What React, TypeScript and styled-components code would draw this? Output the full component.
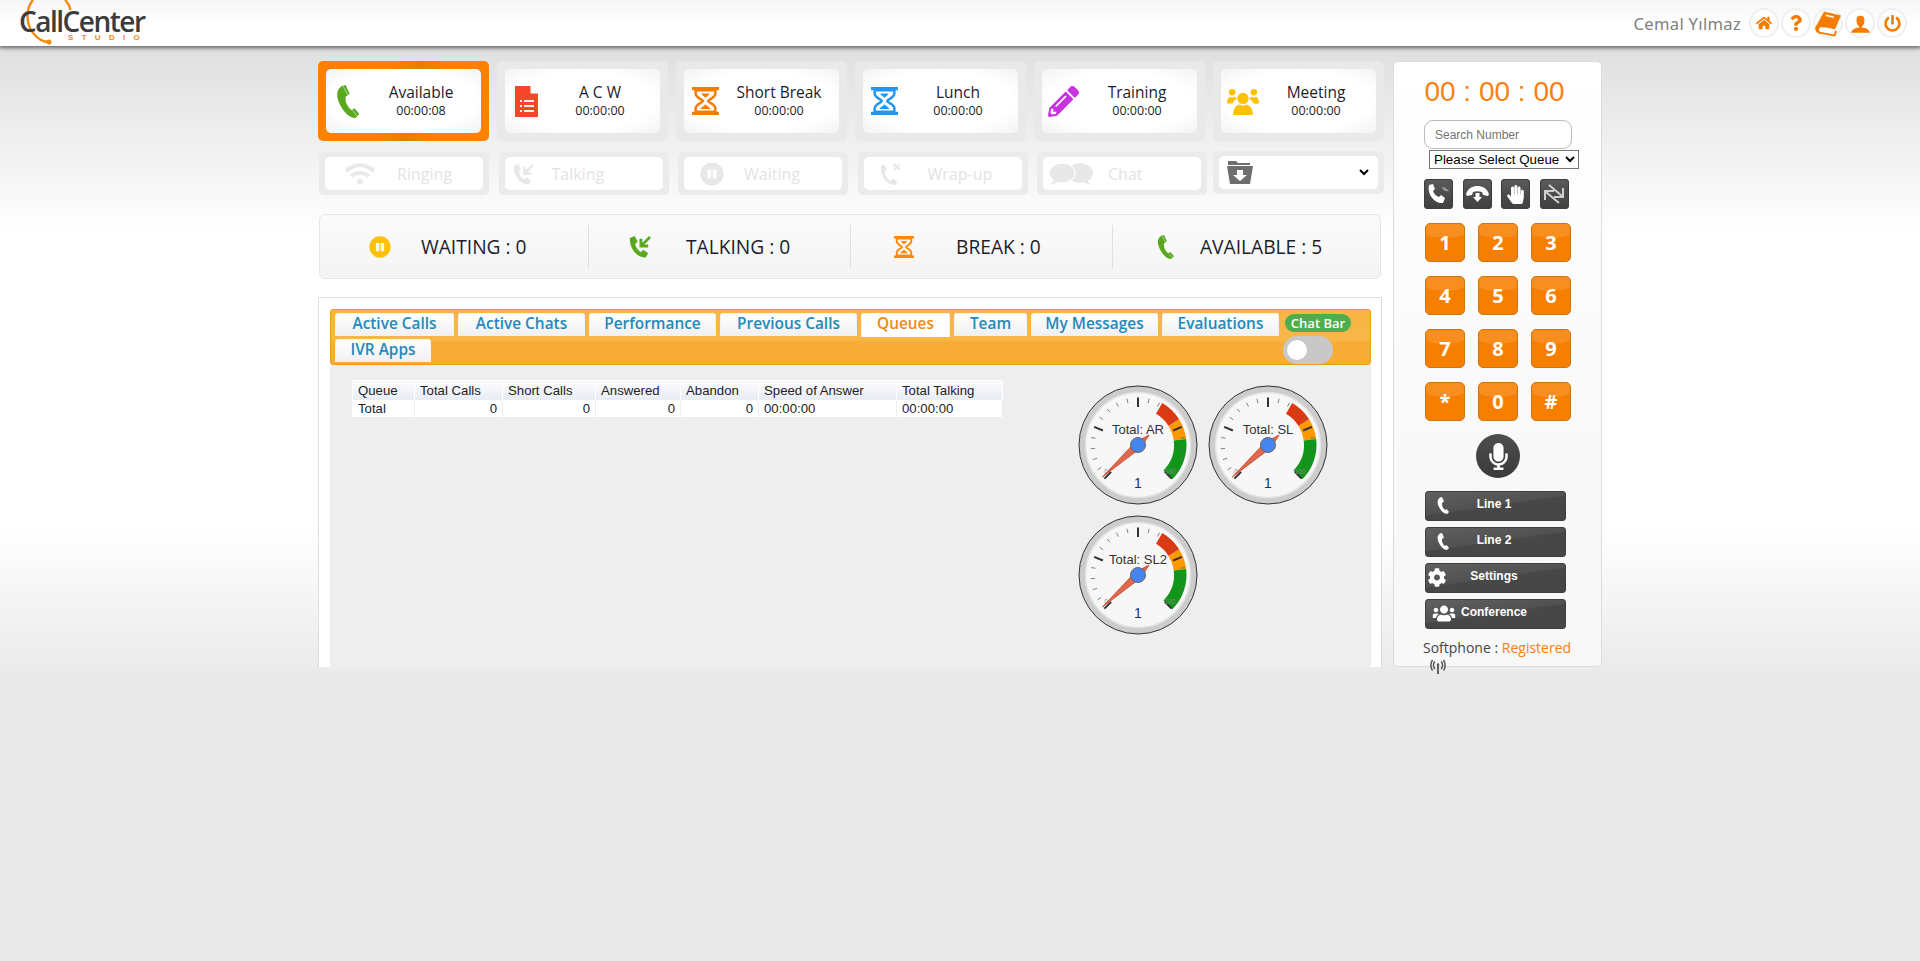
import React from 'react';
import styled, { createGlobalStyle } from 'styled-components';
import { FaPencilAlt, FaWifi, FaPauseCircle, FaHome, FaQuestion, FaPowerOff, FaHandPaper, FaCog, FaMicrophone, FaUsers } from 'react-icons/fa';
import { ImUser } from 'react-icons/im';

const Global = createGlobalStyle`
  html, body { margin: 0; padding: 0; }
  body {
    min-height: 961px;
    font-family: "Liberation Sans", Arial, sans-serif;
    background: linear-gradient(#dfdfdf 46px, #ffffff 232px, #ffffff 528px, #e9e9e9 680px);
    background-repeat: no-repeat;
    background-color: #e9e9e9;
  }
`;

const Page = styled.div`min-height: 961px; overflow: hidden;`;
const Header = styled.header`
  height: 46px; display: flex; align-items: center; justify-content: space-between;
  background: linear-gradient(#f6f6f6, #ffffff 55%, #ffffff);
  box-shadow: 0 1px 4px 1px rgba(0,0,0,.55);
  position: relative; padding: 0 13px 0 20px;
`;
const Logo = styled.div`position: relative; width: 130px; height: 46px; overflow: hidden;`;
const LogoArc = styled.svg`position: absolute; left: 0; top: 0;`;
const LogoText = styled.div`
  position: absolute; left: -1px; top: 8px; font: 600 28px/26px "Open Sans", sans-serif; letter-spacing: -1.5px;
  color: #3c3c3c; white-space: nowrap;
`;
const LogoSub = styled.div`
  position: absolute; left: 48px; top: 34px; font: 700 8px/8px "Liberation Sans", sans-serif; letter-spacing: 8.3px;
  color: #f58a0b; white-space: nowrap;
`;
const UserBar = styled.div`display: flex; align-items: center;`;
const UserName = styled.span`font: 400 16.6px "Noto Sans", sans-serif; color: #808080; margin-right: 6px; letter-spacing: .3px;`;
const Round = styled.span`
  width: 30px; height: 30px; box-sizing: border-box; margin-left: 2px; border-radius: 50%; background: #fff; border: 2px solid #efefef;
  display: flex; align-items: center; justify-content: center; color: #f57c00; overflow: visible;
`;
const Main = styled.main`display: flex; justify-content: center; gap: 11px; padding-top: 15px; align-items: flex-start;`;
const Left = styled.section`width: 1064px;`;
const TopRow = styled.div`display: grid; grid-template-columns: repeat(6, 171px); gap: 8px;`;
const Tile = styled.div<{ $on?: boolean }>`
  height: 80px; box-sizing: border-box; padding: 8px; border-radius: 5px;
  background: ${p => p.$on ? 'linear-gradient(100deg, #fb8200 40%, #e67c06 55%, #fb8200 70%)' : '#e9e9e9'};
`;
const TileIn = styled.div`
  height: 100%; border-radius: 5px; display: flex; align-items: center; position: relative;
  background: radial-gradient(ellipse at center, #ffffff 65%, #f3f3f3 100%);
`;
const TileIcon = styled.span`width: 43px; flex: none; display: flex; justify-content: center;`;
const TileText = styled.div`flex: 1; text-align: center; color: #1d1d2a; padding-right: 8px; font-family: "Open Sans", sans-serif;`;
const TileName = styled.div`font-size: 15.5px; line-height: 20px;`;
const TileTime = styled.div`font-size: 12.5px; line-height: 18px;`;
const SubRow = styled.div`display: grid; grid-template-columns: repeat(6, 170px); gap: 9.5px; margin: 11px 0 0 1px;`;
const SubTile = styled.div`height: 43px; box-sizing: border-box; padding: 5px 6px; border-radius: 5px; background: #ebebeb;`;
const FolderTile = styled(SubTile)`margin: -1px 0 0 -4px; width: 171px;`;
const SubIn = styled.div`
  height: 100%; background: #fff; border-radius: 5px; display: flex; align-items: center; color: #e3e3e3; position: relative;
  font: 400 16px "Open Sans", sans-serif;
`;
const SubIcon = styled.span<{ $w: number }>`width: ${p => p.$w}px; display: flex; justify-content: center; flex: none; color: #e8e8e8;`;
const SubLabel = styled.span<{ $m: number }>`margin-left: ${p => p.$m}px;`;
const FolderIcon = styled.svg`position: absolute; left: 8px; top: 5px; pointer-events: none;`;
const FolderSelect = styled.select`
  width: calc(100% - 6px); height: 100%; border: 0; background: transparent; outline: 0; font-size: 13px; padding: 0 4px 0 0;
`;
const Stats = styled.div`
  display: grid; grid-template-columns: 268px 262px 262px 270px; margin: 19px 0 0 1px; width: 1062px; height: 65px; box-sizing: border-box;
  border: 1px solid #e6e6e6; border-radius: 6px; background: linear-gradient(#fbfbfb, #f4f4f4); align-items: center;
`;
const Stat = styled.div<{ $pad: number; $gap: number; $line?: boolean }>`
  display: flex; align-items: center; height: 44px; padding-left: ${p => p.$pad}px; gap: ${p => p.$gap}px;
  border-left: ${p => p.$line ? '1px solid #e0e0e0' : '0'}; color: #1d1d2a;
  font: 400 19.2px "Open Sans", sans-serif;
`;
const Panel = styled.section`
  margin-top: 18px; height: 370px; box-sizing: border-box; padding: 11px 10px 0 11px; background: #fff; border: 1px solid #dedede; border-bottom: 0;
`;
const TabBar = styled.div`
  height: 56px; box-sizing: border-box; display: flex; padding: 3px 0 0 4px; border: 1px solid #ec9a1e; border-radius: 3px;
  background: linear-gradient(#f9b445 0, #f8b748 55%, #f7ad35 60%, #f7ad35);
`;
const Tabs = styled.div`width: 950px; flex: none; display: flex; flex-wrap: wrap; gap: 2px 4px; align-content: flex-start;`;
const Tab = styled.div<{ $w: number; $on?: boolean }>`
  width: ${p => p.$w}px; height: ${p => p.$on ? 24 : 23}px; box-sizing: border-box; text-align: center; border-radius: 3px 3px 0 0;
  font: 600 15.4px/19px "Open Sans", sans-serif; color: ${p => p.$on ? '#f08a12' : '#2289bd'};
  background: ${p => p.$on ? '#fff' : 'linear-gradient(#ffffff, #f0f0f0)'}; border: 1px solid #f3f3f3; border-bottom: 0;
`;
const ChatSide = styled.div`display: flex; flex-direction: column; align-items: flex-start; width: 70px;`;
const ChatPill = styled.div`
  width: 66px; height: 18px; margin-top: 1px; border-radius: 9px; background: #4cae4f; color: #fff; text-align: center;
  font: 600 13px/18px "Open Sans", sans-serif;
`;
const Toggle = styled.div`
  width: 50px; height: 28px; margin: 4px 0 0 -2px; border-radius: 14px; background: #c8c8c8; position: relative;
  &::after { content: ""; position: absolute; left: 4px; top: 4px; width: 20px; height: 20px; border-radius: 50%; background: #fff; }
`;
const Body = styled.div`height: 303px; box-sizing: border-box; background: #eeeeee; display: flex; align-items: flex-start; padding: 15px 0 0 22px;`;
const Table = styled.table`
  width: 650px; border-collapse: collapse; table-layout: fixed; background: #fff; font-size: 13.2px; color: #222; border: 1px solid #fff;
`;
const Th = styled.th<{ $w: number }>`
  width: ${p => p.$w}px; font-weight: 400; text-align: left; height: 19px; padding: 1px 5px 0; box-sizing: border-box; border-right: 1px solid #fff;
  background: linear-gradient(#fcfcff, #e6ebf4); white-space: nowrap;
`;
const Td = styled.td<{ $num?: boolean }>`
  height: 17px; padding: 0 5px; text-align: ${p => p.$num ? 'right' : 'left'}; border-right: 1px solid #eee; border-bottom: 1px solid #eee;
`;
const Gauges = styled.div`display: grid; grid-template-columns: 130px 130px; grid-auto-rows: 130px; margin-left: 70px;`;
const Right = styled.aside`
  width: 209px; height: 606px; box-sizing: border-box; background: linear-gradient(#ffffff, #f8f8f8 70%); border: 1px solid #dcdcdc; border-radius: 5px;
  display: flex; flex-direction: column; padding: 0 30px; position: relative;
`;
const Timer = styled.div`font-size: 28px; color: #f98012; text-align: center; line-height: 32px; margin: 14px 0 0 -6px; white-space: nowrap;`;
const Search = styled.input`
  width: 148px; height: 29px; flex: none; box-sizing: border-box; margin-top: 12px; border: 1px solid #bbb; border-radius: 9px; padding: 0 10px; font: 12px "Liberation Sans", sans-serif; background: #fff;
  &::placeholder { color: #757575; opacity: 1; }
`;
const QueueSelect = styled.select`
  width: 150px; height: 19px; margin: 1px 0 0 5px; font: 13.33px "Liberation Sans", sans-serif; background: #fff; padding: 0; flex: none; border: 1px solid #767676;
`;
const Tools = styled.div`display: flex; gap: 9.5px; margin-top: 10px;`;
const ToolBtn = styled.span`
  width: 29px; height: 30px; border-radius: 4px; display: flex; align-items: center; justify-content: center; color: #fff;
  background: linear-gradient(#5c5c5c, #4c4c4c 50%, #404040); box-shadow: inset 0 0 0 1px #3d3d3d;
`;
const Keypad = styled.div`display: grid; grid-template-columns: repeat(3, 40px); grid-auto-rows: 39px; gap: 14px 13px; margin: 14px 0 0 1px;`;
const Key = styled.div`
  border-radius: 5px; background: #f77f00; border: 1px solid #cf7510; box-sizing: border-box; color: #fff; text-align: center; position: relative;
  font: 700 20px/37px "Open Sans", sans-serif;
  &::before {
    content: ""; position: absolute; left: 0; right: 0; top: 0; height: 38%; background: rgba(255,255,255,.12);
    border-radius: 4px 4px 50% 50% / 4px 4px 35% 35%;
  }
`;
const Mic = styled.div`
  width: 44px; height: 44px; border-radius: 50%; margin: 13px 0 0 52px; display: flex; align-items: center; justify-content: center; color: #fff;
  background: linear-gradient(#4e4e4e, #3a3a3a);
`;
const Lines = styled.div`display: flex; flex-direction: column; gap: 6.5px; margin: 13px 0 0 1px;`;
const Line = styled.div`
  width: 141px; height: 29.5px; border-radius: 3px; position: relative; color: #fff; box-sizing: border-box; padding-right: 3px; text-align: center;
  background: linear-gradient(172deg, #606060, #515151 48%, #474747 50%, #464646); border: 1px solid #3e3e3e;
  font: 700 12px/24px "Liberation Sans", sans-serif;
`;
const LineIcon = styled.span<{ $x: number }>`position: absolute; left: ${p => p.$x}px; top: 0; bottom: 0; transform: translateX(-50%); display: flex; align-items: center;`;
const Soft = styled.div`font: 400 14px "Open Sans", sans-serif; color: #444; margin: 9px 0 0 -1px; white-space: nowrap;`;
const Reg = styled.span`color: #f98012;`;
const Radio = styled.svg`position: absolute; left: 36px; bottom: -9px;`;

const Phone = ({ c, h, stripes }: { c: string; h: number; stripes?: boolean }) => (
  <svg width={(h * 24) / 34} height={h} viewBox="0 0 24 34">
    <path d="M6 1 10 0l4 9-4 3c-1 5 2 11 6 14l3-2 5 6-4 4c-6 0-12-6-16-14C0 12 0 5 6 1z" fill={c} />
    {stripes && <path d="M7.500 1.500 12 10M17 26l4.500 6" stroke="#fff" strokeOpacity=".6" strokeWidth="1" fill="none" />}
  </svg>
);
const Hourglass = ({ c, w = 27, h = 28 }: { c: string; w?: number; h?: number }) => (
  <svg width={w} height={h} viewBox="0 0 26 26" preserveAspectRatio="none">
    <path d="M0 0h26v3H0zM0 23h26v3H0z" fill={c} />
    <path d="M3.500 3v3c0 4 6 5 7 7-1 2-7 3-7 7v3h19v-3c0-4-6-5-7-7 1-2 7-3 7-7V3z" fill="none" stroke={c} strokeWidth="2.400" />
    <path d="M8 20.500c1-2 4-3 5-4.500 1 1.500 4 2.500 5 4.500zM9 6h8c-1 2-3 3-4 4-1-1-3-2-4-4z" fill={c} />
  </svg>
);
const Doc = () => (
  <svg width="23" height="31" viewBox="0 0 23 31">
    <path d="M0 0h15l8 8v23H0z" fill="#f4472a" />
    <path d="M15.500 0v7.500H23z" fill="#fff" />
    <path d="M5 14h2v2H5zM9 14h10v2H9zM5 19h2v2H5zM9 19h10v2H9zM5 24h2v2H5zM9 24h10v2H9z" fill="#fff" opacity=".9" />
  </svg>
);
const People = ({ c }: { c: string }) => (
  <svg width="32" height="27" viewBox="0 0 31 26" fill={c}>
    <circle cx="15.500" cy="10" r="5.500" /><path d="M6 26c0-7 3-9 6-10 2 1.500 5 1.500 7 0 3 1 6 3 6 10z" />
    <circle cx="5" cy="4" r="3.200" /><path d="M0 15c0-4 1-6 3-6.500 1 .7 3 .7 4 0 1 .3 2 1 2.500 2-2 1-3.500 2-4 4.500z" />
    <circle cx="26" cy="4" r="3.200" /><path d="M31 15c0-4-1-6-3-6.500-1 .7-3 .7-4 0-1 .3-2 1-2.500 2 2 1 3.500 2 4 4.500z" />
  </svg>
);
const TalkIcon = ({ c, s = 24 }: { c: string; s?: number }) => (
  <svg width={s} height={s} viewBox="0 0 24 24" fill={c}>
    <path d="M2 3 7 1l3 6-2.500 2.500c.5 3.500 3 6.500 6 8.500l2.500-2.500 5 3.500-2.500 4.500C9 24 1 13 2 3z" />
    <path d="m22 1 2 2-7 7h4v3h-9V4h3v4z" />
  </svg>
);
const WrapIcon = () => (
  <svg width="22" height="24" viewBox="0 0 24 24" fill="#e8e8e8">
    <path d="M2 3 6 2l2.500 6L6 10c.5 4 3 7 6.500 9l2.500-2 5 3-2 4C8 24 1 14 2 3z" />
    <path d="m15 2 2-1.500L19.500 3 22 .5 23.500 2 21 4.500 23.500 7 22 8.500 19.500 6 17 8.500 15.500 7 18 4.500z" />
  </svg>
);
const ChatIcon = () => (
  <svg width="44" height="22" viewBox="0 0 44 22" fill="#e8e8e8">
    <ellipse cx="31" cy="10" rx="13" ry="10" /><path d="M38 17l4 5-9-3z" />
    <ellipse cx="13" cy="10" rx="13" ry="10" stroke="#fff" strokeWidth="1.200" /><path d="M5 17l-4 5 9-3z" />
  </svg>
);
const BookIcon = () => (
  <svg width="27" height="27" viewBox="0 0 26 26" fill="#f57c00">
    <path d="M9 1 26 5l-6 14C16 18 9 16 5 17c-2 2-1 4 1 4.500L19 24l1-4 2 1-2 5L4 23c-4-1-5-6-2-9z" />
    <path d="m11 4 8 2-.5 1.500-8-2z" fill="#fff" />
  </svg>
);
const CallToolIcon = () => (
  <svg width="23" height="20" viewBox="0 0 23 20">
    <path d="M2 1 6 0l2 5-2 2c1 3 3 5 6 6l2-2 4 3-2 5C8 20 0 11 2 1z" fill="#fff" />
    <path d="M15 3c3 0 5 2 7 4-3 1-6 0-7-4z" fill="#999" />
  </svg>
);
const HoldIcon = () => (
  <svg width="23" height="19" viewBox="0 0 23 19" fill="#fff">
    <path d="M0 9C2 3 7 1 11.500 1S21 3 23 9l-1 2-5-1-1-3c-3-1-6-1-9 0l-1 3-5 1z" />
    <path d="M9.500 8h4v4H16l-4.500 5L7 12h2.500z" />
  </svg>
);
const SwapIcon = () => (
  <svg width="24" height="24" viewBox="0 0 24 24" fill="none" stroke="#cfcfcf" strokeWidth="2">
    <path d="M7 3 20 14M21 6v9h-9M17 21 4 10M3 18V9h9" />
  </svg>
);
const RadioGlyph = () => (
  <Radio width="16" height="16" viewBox="0 0 16 16" fill="none" stroke="#555" strokeWidth="1.500">
    <path d="M4.800 2.500C3 5 3 7.500 4.800 10M11.200 2.500c1.800 2.500 1.800 5 0 7.500M2.500 1C.3 4.500.3 8 2.500 11.500M13.500 1c2.200 3.500 2.200 7 0 10.500" />
    <path d="M8 6v9" strokeWidth="1.800" /><circle cx="8" cy="5.500" r="1.300" fill="#555" stroke="none" />
  </Radio>
);

const LogoMark = () => (
  <LogoArc width="70" height="46" viewBox="0 0 70 46" fill="none" stroke="#f58a0b" strokeWidth="2.400">
    <path d="M13 0C6 8 5 24 14 34c4 5 9 8 15 8M45 0c3 3 5 7 5.500 10" />
    <circle cx="29" cy="42" r="2.500" fill="#f58a0b" stroke="none" />
  </LogoArc>
);

const polar = (r: number, deg: number, cx = 65, cy = 65) => {
  const a = ((deg - 90) * Math.PI) / 180;
  return [cx + r * Math.cos(a), cy + r * Math.sin(a)];
};
const arc = (from: number, to: number, r1: number, r2: number) => {
  const [a, b] = polar(r2, from); const [c, d] = polar(r2, to); const [e, f] = polar(r1, to); const [g, h] = polar(r1, from);
  return `M${a} ${b}A${r2} ${r2} 0 0 1 ${c} ${d}L${e} ${f}A${r1} ${r1} 0 0 0 ${g} ${h}Z`;
};
const Gauge = ({ label }: { label: string }) => {
  const ticks = Array.from({ length: 21 }, (_, i) => i * 5);
  const ang = -132;
  const [tx, ty] = polar(48, ang); const [bx, by] = polar(15, ang + 180);
  const [lx, ly] = polar(4, ang + 90); const [rx, ry] = polar(4, ang - 90);
  return (
    <svg width="130" height="130" viewBox="0 0 130 130">
      <circle cx="65" cy="65" r="59" fill="#ccc" stroke="#333" strokeWidth="1" />
      <circle cx="65" cy="65" r="52.500" fill="#f7f7f7" stroke="#e2e2e2" strokeWidth="1.500" />
      <path d={arc(30, 58, 36, 48.500)} fill="#dc3912" />
      <path d={arc(58, 83, 36, 48.500)} fill="#ff9900" />
      <path d={arc(83, 135, 36, 48.500)} fill="#109618" />
      {ticks.map(v => {
        const deg = -135 + v * 2.7; const major = v % 25 === 0;
        const [a, b] = polar(47.500, deg); const [c, d] = polar(major ? 38 : 43, deg);
        return <line key={v} x1={a} y1={b} x2={c} y2={d} stroke={major ? '#333' : '#666'} strokeWidth={major ? 2 : .8} />;
      })}
      <text x="65" y="54" textAnchor="middle" fontSize="13" fill="#333" fontFamily="Liberation Sans">{label}</text>
      <text x="33" y="94" fontSize="6.500" fill="#7d8aa0" fontFamily="Liberation Sans" textAnchor="middle">0</text>
      <text x="97" y="94" fontSize="6.500" fill="#888" fontFamily="Liberation Sans" textAnchor="middle">100</text>
      <text x="65" y="108" textAnchor="middle" fontSize="14" fill="#2a3340" fontFamily="Liberation Sans">1</text>
      <path d={`M${tx} ${ty}L${lx} ${ly}L${bx} ${by}L${rx} ${ry}Z`} fill="#dc6950" stroke="#c63310" strokeWidth=".7" />
      <circle cx="65" cy="65" r="7.500" fill="#4684ee" stroke="#666" strokeWidth="1" />
    </svg>
  );
};

const G = '#5aa81e';
const states = [
  { n: 'Available', t: '00:00:08', on: true, i: <Phone c={G} h={33} stripes /> },
  { n: 'A C W', t: '00:00:00', i: <Doc /> },
  { n: 'Short Break', t: '00:00:00', i: <Hourglass c="#f57c00" /> },
  { n: 'Lunch', t: '00:00:00', i: <Hourglass c="#2196f3" /> },
  { n: 'Training', t: '00:00:00', i: <FaPencilAlt size={31} color="#c832e0" /> },
  { n: 'Meeting', t: '00:00:00', i: <People c="#ffc107" /> },
];
const subs = [
  { n: 'Ringing', w: 70, m: 2, i: <FaWifi size={30} /> },
  { n: 'Talking', w: 36, m: 11, i: <TalkIcon c="#e8e8e8" s={22} /> },
  { n: 'Waiting', w: 56, m: 4, i: <FaPauseCircle size={24} /> },
  { n: 'Wrap-up', w: 52, m: 12, i: <WrapIcon /> },
  { n: 'Chat', w: 56, m: 9, i: <ChatIcon /> },
];
const stats = [
  { n: 'WAITING : 0', pad: 49, gap: 30, i: <FaPauseCircle size={22} color="#ffc107" /> },
  { n: 'TALKING : 0', pad: 39, gap: 35, line: true, i: <TalkIcon c={G} s={23} /> },
  { n: 'BREAK : 0', pad: 43, gap: 42, line: true, i: <Hourglass c="#f58a0b" w={20} h={22} /> },
  { n: 'AVAILABLE : 5', pad: 44, gap: 26, line: true, i: <Phone c={G} h={24} stripes /> },
];
const tabs = [
  { n: 'Active Calls', w: 119 }, { n: 'Active Chats', w: 127 }, { n: 'Performance', w: 127 }, { n: 'Previous Calls', w: 137 },
  { n: 'Queues', w: 89, on: true }, { n: 'Team', w: 73 }, { n: 'My Messages', w: 127 }, { n: 'Evaluations', w: 117 }, { n: 'IVR Apps', w: 96 },
];
const cols = [62, 88, 93, 85, 78, 138, 106];
const head = ['Queue', 'Total Calls', 'Short Calls', 'Answered', 'Abandon', 'Speed of Answer', 'Total Talking'];
const lines = [
  { n: 'Line 1', x: 17, i: <Phone c="#fff" h={17} /> },
  { n: 'Line 2', x: 17, i: <Phone c="#fff" h={17} /> },
  { n: 'Settings', x: 11, i: <FaCog size={19} /> },
  { n: 'Conference', x: 18, i: <FaUsers size={23} /> },
];

export default function App() {
  return (
    <Page>
      <Global />
      <Header>
        <Logo>
          <LogoMark />
          <LogoText>CallCenter</LogoText>
          <LogoSub>STUDIO</LogoSub>
        </Logo>
        <UserBar>
          <UserName>Cemal Yılmaz</UserName>
          <Round><FaHome size={16} /></Round>
          <Round><FaQuestion size={16} /></Round>
          <Round><BookIcon /></Round>
          <Round><ImUser size={21} /></Round>
          <Round><FaPowerOff size={17} /></Round>
        </UserBar>
      </Header>
      <Main>
        <Left>
          <TopRow>
            {states.map(s => (
              <Tile key={s.n} $on={s.on}>
                <TileIn>
                  <TileIcon>{s.i}</TileIcon>
                  <TileText><TileName>{s.n}</TileName><TileTime>{s.t}</TileTime></TileText>
                </TileIn>
              </Tile>
            ))}
          </TopRow>
          <SubRow>
            {subs.map(s => (
              <SubTile key={s.n}><SubIn><SubIcon $w={s.w}>{s.i}</SubIcon><SubLabel $m={s.m}>{s.n}</SubLabel></SubIn></SubTile>
            ))}
            <FolderTile>
              <SubIn>
                <FolderSelect aria-label="Folder"><option></option></FolderSelect>
                <FolderIcon width="26" height="23" viewBox="0 0 26 23" fill="#6e6e6e">
                  <path d="M1 0h8l2 2h12v2H1zM0 5h26l-3 18H3z" />
                  <path d="M10 9h6v5h4l-7 6-7-6h4z" fill="#fff" />
                </FolderIcon>
              </SubIn>
            </FolderTile>
          </SubRow>
          <Stats>
            {stats.map(s => (
              <Stat key={s.n} $pad={s.pad} $gap={s.gap} $line={s.line}>{s.i}<span>{s.n}</span></Stat>
            ))}
          </Stats>
          <Panel>
            <TabBar>
              <Tabs>{tabs.map(t => <Tab key={t.n} $w={t.w} $on={t.on}>{t.n}</Tab>)}</Tabs>
              <ChatSide><ChatPill>Chat Bar</ChatPill><Toggle /></ChatSide>
            </TabBar>
            <Body>
              <Table>
                <thead><tr>{head.map((h, i) => <Th key={h} $w={cols[i]}>{h}</Th>)}</tr></thead>
                <tbody><tr>
                  <Td>Total</Td><Td $num>0</Td><Td $num>0</Td><Td $num>0</Td><Td $num>0</Td><Td>00:00:00</Td><Td>00:00:00</Td>
                </tr></tbody>
              </Table>
              <Gauges>
                <Gauge label="Total: AR" /><Gauge label="Total: SL" /><Gauge label="Total: SL2" />
              </Gauges>
            </Body>
          </Panel>
        </Left>
        <Right>
          <Timer>00 : 00 : 00</Timer>
          <Search placeholder="Search Number" />
          <QueueSelect aria-label="Queue"><option>Please Select Queue</option></QueueSelect>
          <Tools>
            <ToolBtn><CallToolIcon /></ToolBtn>
            <ToolBtn><HoldIcon /></ToolBtn>
            <ToolBtn><FaHandPaper size={19} /></ToolBtn>
            <ToolBtn><SwapIcon /></ToolBtn>
          </Tools>
          <Keypad>
            {['1', '2', '3', '4', '5', '6', '7', '8', '9', '*', '0', '#'].map(k => <Key key={k}>{k}</Key>)}
          </Keypad>
          <Mic><FaMicrophone size={27} /></Mic>
          <Lines>
            {lines.map(l => <Line key={l.n}><LineIcon $x={l.x}>{l.i}</LineIcon>{l.n}</Line>)}
          </Lines>
          <Soft>Softphone : <Reg>Registered</Reg></Soft>
          <RadioGlyph />
        </Right>
      </Main>
    </Page>
  );
}
